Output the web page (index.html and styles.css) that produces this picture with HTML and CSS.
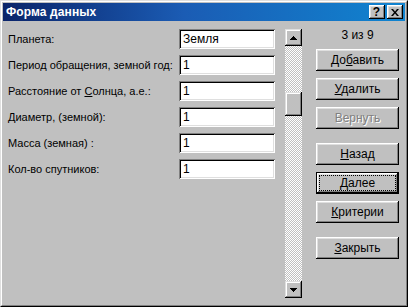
FILE: index.html
```html
<!DOCTYPE html>
<html lang="ru">
<head>
<meta charset="utf-8">
<title>Форма данных</title>
<link rel="stylesheet" href="styles.css">
</head>
<body>

  <div class="window">
    <div class="frame">

      <div class="titlebar">
        <span class="title">Форма данных</span>
        <div class="titlebuttons">
          <div class="tbtn">?</div>
          <div class="tbtn">
            <svg width="8" height="7" viewBox="0 0 8 7">
              <path d="M0 0h2l2 2.5 2-2.5h2l-3 3.5 3 3.5h-2l-2-2.5-2 2.5h-2l3-3.5z" fill="#000"/>
            </svg>
          </div>
        </div>
      </div>

      <div class="client">

        <div class="fields">
          <div class="label">Планета:</div>
          <div class="field">Земля</div>

          <div class="label">Период обращения, земной год:</div>
          <div class="field">1</div>

          <div class="label">Расстояние от <u>С</u>олнца, а.е.:</div>
          <div class="field">1</div>

          <div class="label">Диаметр, (земной):</div>
          <div class="field">1</div>

          <div class="label">Масса (земная) :</div>
          <div class="field">1</div>

          <div class="label">Кол-во спутников:</div>
          <div class="field">1</div>
        </div>

        <div class="scrollbar">
          <div class="arrow">
            <svg width="7" height="4" viewBox="0 0 7 4"><path d="M3 0h1v1h1v1h1v1h1v1h-7v-1h1v-1h1v-1h1z" fill="#000"/></svg>
          </div>
          <div class="track">
            <div class="thumb"></div>
          </div>
          <div class="arrow">
            <svg width="7" height="4" viewBox="0 0 7 4"><path d="M0 0h7v1h-1v1h-1v1h-1v1h-1v-1h-1v-1h-1v-1h-1z" fill="#000"/></svg>
          </div>
        </div>

        <div class="actions">
          <div class="counter">3 из 9</div>
          <div class="btn">До<u>б</u>авить</div>
          <div class="btn"><u>У</u>далить</div>
          <div class="btn disabled">Вернуть</div>
          <div class="btn group"><u>Н</u>азад</div>
          <div class="btn default"><span class="focus"><u>Д</u>алее</span></div>
          <div class="btn"><u>К</u>ритерии</div>
          <div class="btn group"><u>З</u>акрыть</div>
        </div>

      </div>

    </div>
  </div>

</body>
</html>
```

FILE: styles.css
```css
html, body {
  margin: 0;
  padding: 0;
}

body {
  background: #c0c0c0;
  font-family: "Liberation Sans", Arial, sans-serif;
  font-size: 11px;
  color: #000;
}

u {
  text-decoration: underline;
  text-underline-offset: 1px;
}

.window {
  width: 408px;
  height: 307px;
  box-sizing: border-box;
  border: 1px solid;
  border-color: #dfdfdf #000 #000 #dfdfdf;
  background: #c0c0c0;
}

.frame {
  height: 100%;
  box-sizing: border-box;
  border: 1px solid;
  border-color: #fff #808080 #808080 #fff;
  padding: 1px;
  display: flex;
  flex-direction: column;
}

/* title bar */

.titlebar {
  height: 18px;
  background: linear-gradient(to right, #0a246a, #1b5cb4 45%, #1084d0);
  display: flex;
  align-items: center;
  justify-content: space-between;
  padding: 0 2px 0 3px;
}

.title {
  color: #fff;
  font-weight: bold;
  font-size: 12px;
  letter-spacing: 0.1px;
}

.titlebuttons {
  display: flex;
  gap: 2px;
}

.tbtn {
  width: 16px;
  height: 14px;
  box-sizing: border-box;
  background: #c0c0c0;
  box-shadow: inset -1px -1px #000, inset 1px 1px #fff, inset -2px -2px #808080, inset 2px 2px #dfdfdf;
  display: flex;
  align-items: center;
  justify-content: center;
  font-weight: bold;
  font-size: 12px;
  line-height: 14px;
  padding-right: 1px;
}

/* client area */

.client {
  flex: 1;
  display: flex;
  padding-top: 8px;
}

.fields {
  display: grid;
  grid-template-columns: 171px 96px;
  grid-auto-rows: 20px;
  row-gap: 6px;
  padding-left: 5px;
  align-content: start;
}

.label {
  line-height: 20px;
  white-space: nowrap;
}

.field {
  background: #fff;
  box-shadow: inset 1px 1px #808080, inset -1px -1px #fff, inset 2px 2px #000, inset -2px -2px #dfdfdf;
  padding: 0 4px;
  line-height: 20px;
  font-size: 12px;
}

/* scrollbar */

.scrollbar {
  width: 17px;
  height: 269px;
  margin-left: 10px;
  display: flex;
  flex-direction: column;
}

.arrow {
  height: 17px;
  flex: none;
  background: #c0c0c0;
  box-shadow: inset -1px -1px #000, inset 1px 1px #dfdfdf, inset -2px -2px #808080, inset 2px 2px #fff;
  display: flex;
  align-items: center;
  justify-content: center;
}

.track {
  flex: 1;
  background: repeating-conic-gradient(#fff 0 25%, #c0c0c0 0 50%) 0 0 / 2px 2px;
  padding-top: 46px;
}

.thumb {
  height: 24px;
  background: #c0c0c0;
  box-shadow: inset -1px -1px #000, inset 1px 1px #dfdfdf, inset -2px -2px #808080, inset 2px 2px #fff;
}

/* buttons */

.actions {
  width: 83px;
  margin-left: 14px;
  display: flex;
  flex-direction: column;
  gap: 7px;
}

.counter {
  height: 13px;
  line-height: 13px;
  text-align: center;
  font-size: 12px;
}

.btn {
  height: 22px;
  box-sizing: border-box;
  background: #c0c0c0;
  box-shadow: inset -1px -1px #000, inset 1px 1px #fff, inset -2px -2px #808080, inset 2px 2px #dfdfdf;
  line-height: 22px;
  text-align: center;
  font-size: 12px;
}

.btn.group {
  margin-top: 7px;
}

.btn.disabled {
  color: #808080;
  text-shadow: 1px 1px #fff;
}

.btn.default {
  border: 1px solid #000;
  padding: 3px;
  line-height: 14px;
}

.focus {
  display: block;
  height: 14px;
  outline: 1px dotted #000;
  outline-offset: 0;
}
```
